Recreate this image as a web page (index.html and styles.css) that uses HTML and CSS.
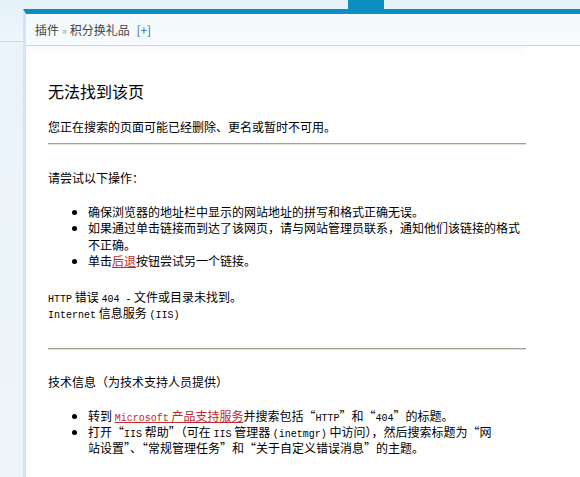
FILE: index.html
```html
<!DOCTYPE html>
<html>
  <head>
    <meta charset="UTF-8">
    <title>无法找到该页</title>
    <link rel="stylesheet" href="styles.css">
  </head>
  <body>
    <div class="topbar">
      <span class="tab"></span>
    </div>
    <div id="wrap">
      <div class="crumb">
        插件 <span class="sep">&raquo;</span> 积分换礼品 <a href="#" class="more">[+]</a>
      </div>
      <div class="content">
        <h1>无法找到该页</h1>
        <p class="lead">您正在搜索的页面可能已经删除、更名或暂时不可用。</p>
        <hr>
        <p class="head">请尝试以下操作：</p>
        <ul>
          <li>确保浏览器的地址栏中显示的网站地址的拼写和格式正确无误。</li>
          <li>如果通过单击链接而到达了该网页，请与网站管理员联系，通知他们该链接的格式<br>不正确。</li>
          <li>单击<a href="#" class="red">后退</a>按钮尝试另一个链接。</li>
        </ul>
        <p class="code"><span class="en">HTTP</span> 错误 <span class="en">404 -</span> 文件或目录未找到。<br>
          <span class="en">Internet</span> 信息服务 <span class="en">(IIS)</span></p>
        <hr class="second">
        <p class="head">技术信息（为技术支持人员提供）</p>
        <ul>
          <li>转到 <a href="#" class="red"><span class="en">Microsoft</span> 产品支持服务</a>并搜索包括“<span class="en">HTTP</span>”和“<span class="en">404</span>”的标题。</li>
          <li>打开“<span class="en">IIS</span> 帮助”（可在 <span class="en">IIS</span> 管理器 <span class="en">(inetmgr)</span> 中访问），然后搜索标题为“网<br>站设置”、“常规管理任务”和“关于自定义错误消息”的主题。</li>
        </ul>
      </div>
    </div>
  </body>
</html>
```

FILE: styles.css
```css
body {
  margin: 0;
  font-family: "Noto Sans CJK SC", "Liberation Sans", sans-serif;
  font-size: 12px;
  color: #000;
  background-color: #e9f3fa;
  background-image: linear-gradient(to bottom, #e4f0f9 0px, #eef6fb 41px, #c6dbe8 41px, #c6dbe8 42px, #eaf3f9 42px, #edf5fa 477px);
  overflow: hidden;
}

.topbar {
  height: 9px;
  display: flex;
}

.tab {
  display: block;
  width: 36px;
  margin-left: 348px;
  background-color: #0a8fc0;
}

#wrap {
  margin-left: 23px;
  border-top: 5px solid #0a8fc0;
  border-left: 3px solid #d3e5f2;
  background-color: #fff;
  height: 470px;
}

.crumb {
  height: 31px;
  line-height: 31px;
  padding-left: 9px;
  color: #444;
  background: linear-gradient(to bottom, #f3f9fc, #f7fbfd);
  border-bottom: 1px solid #bfd6e3;
}

.crumb .sep {
  color: #999;
  font-size: 11px;
}

.crumb .more {
  color: #2f6ca0;
  text-decoration: none;
  margin-left: 4px;
}

.content {
  width: 478px;
  padding-left: 22px;
  background: linear-gradient(to bottom, #f8fbfd 0px, #fff 12px);
}

h1 {
  margin: 0;
  padding-top: 35px;
  font-size: 16px;
  font-weight: normal;
  line-height: 20px;
}

p {
  margin: 0;
  line-height: 16px;
}

.lead {
  margin-top: 18px;
}

hr {
  margin: 8px 0 0 0;
  height: 0;
  border: 0;
  border-top: 1px solid #a09f92;
  border-bottom: 1px solid #e2e0d4;
}

hr.second {
  margin-top: 27px;
}

p.head {
  margin-top: 25px;
}

hr.second + p.head {
  margin-top: 24px;
}

ul {
  margin: 18px 0 0 0;
  padding-left: 40px;
  line-height: 16.4px;
}

.code {
  margin-top: 19px;
}

.en {
  font-family: "Liberation Mono", monospace;
  font-size: 10px;
  line-height: 1;
}

a.red {
  color: #c1272d;
  text-decoration: underline;
}
```
